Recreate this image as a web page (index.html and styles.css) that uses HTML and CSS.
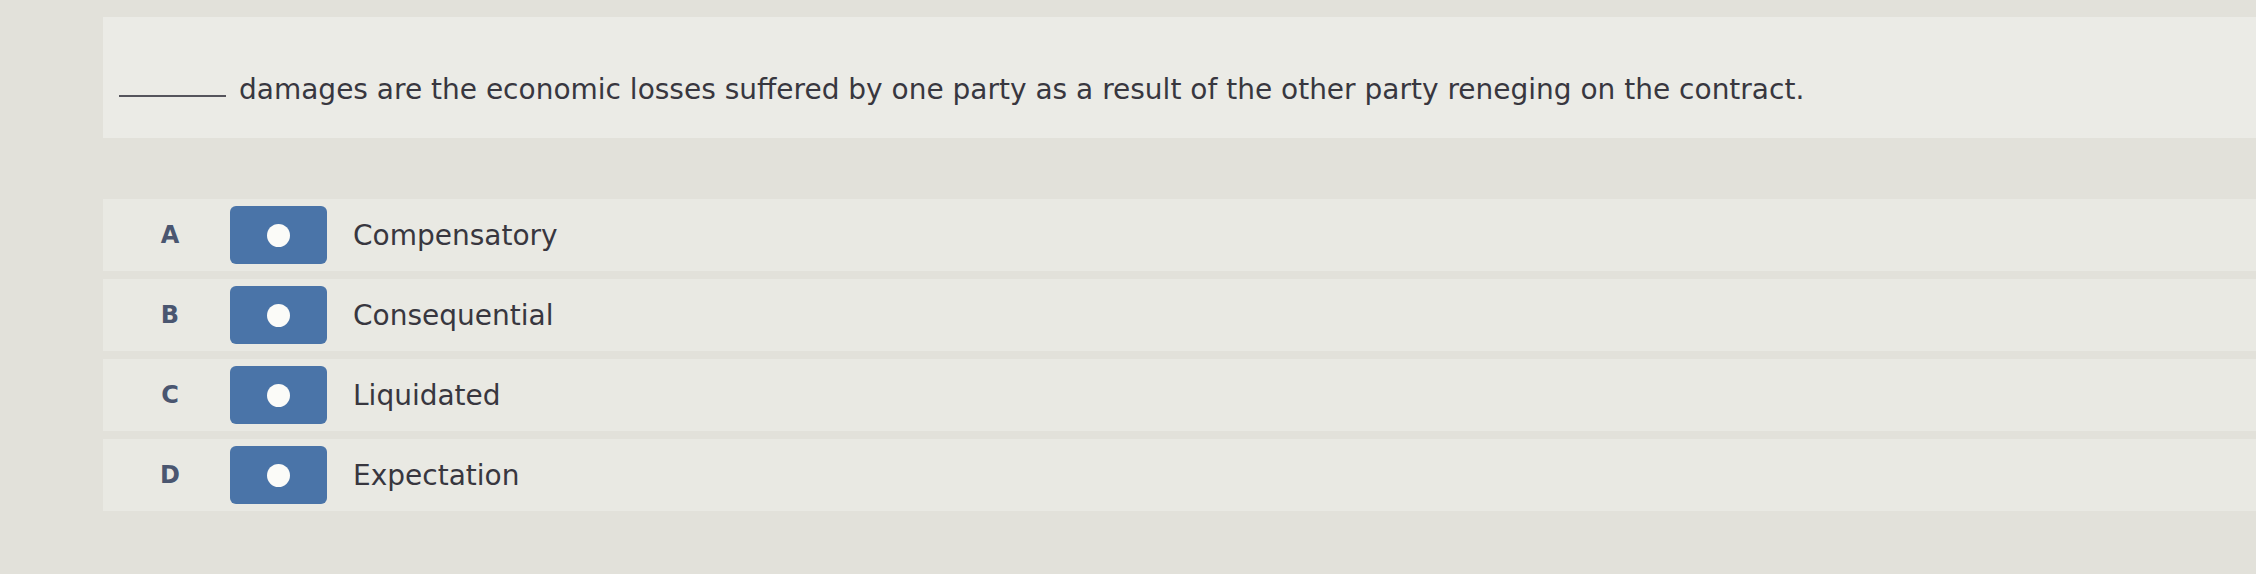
FILE: index.html
```html
<!DOCTYPE html>
<html lang="en">
<head>
<meta charset="utf-8">
<title>Question</title>
<link rel="stylesheet" href="styles.css">
</head>
<body>
<div class="page">
  <div class="question">
    <span class="blank"></span>
    <span class="stem">damages are the economic losses suffered by one party as a result of the other party reneging on the contract.</span>
  </div>
  <div class="options">
    <div class="option">
      <span class="letter">A</span>
      <span class="radio"><span class="dot"></span></span>
      <span class="label">Compensatory</span>
    </div>
    <div class="option">
      <span class="letter">B</span>
      <span class="radio"><span class="dot"></span></span>
      <span class="label">Consequential</span>
    </div>
    <div class="option">
      <span class="letter">C</span>
      <span class="radio"><span class="dot"></span></span>
      <span class="label">Liquidated</span>
    </div>
    <div class="option">
      <span class="letter">D</span>
      <span class="radio"><span class="dot"></span></span>
      <span class="label">Expectation</span>
    </div>
  </div>
</div>
</body>
</html>
```

FILE: styles.css
```css
html, body {
  margin: 0;
  padding: 0;
}
body {
  width: 2256px;
  height: 574px;
  overflow: hidden;
  background: #e2e1da;
  font-family: "DejaVu Sans", Verdana, sans-serif;
  color: #38373f;
}
.page {
  padding: 17px 0 0 103px;
}
.question {
  height: 121px;
  box-sizing: border-box;
  padding: 56px 16px 0 16px;
  background: #ebebe6;
  display: flex;
  align-items: flex-start;
  font-size: 28px;
  line-height: 34px;
}
.blank {
  display: inline-block;
  width: 107px;
  height: 22px;
  border-bottom: 2px solid #55545c;
  margin-right: 13px;
  flex: none;
}
.stem {
  white-space: nowrap;
}
.options {
  margin-top: 61px;
  display: flex;
  flex-direction: column;
  gap: 8px;
}
.option {
  height: 72px;
  background: #e9e9e3;
  display: flex;
  align-items: center;
  padding-left: 47px;
}
.letter {
  width: 40px;
  text-align: center;
  font-weight: bold;
  font-size: 24px;
  color: #4a5670;
  margin-right: 40px;
}
.radio {
  width: 97px;
  height: 58px;
  border-radius: 6px;
  background: #4a74a8;
  display: flex;
  align-items: center;
  justify-content: center;
  flex: none;
}
.dot {
  width: 23px;
  height: 23px;
  border-radius: 50%;
  background: #fbfbf8;
}
.label {
  margin-left: 26px;
  font-size: 28px;
  color: #38373f;
}
```
